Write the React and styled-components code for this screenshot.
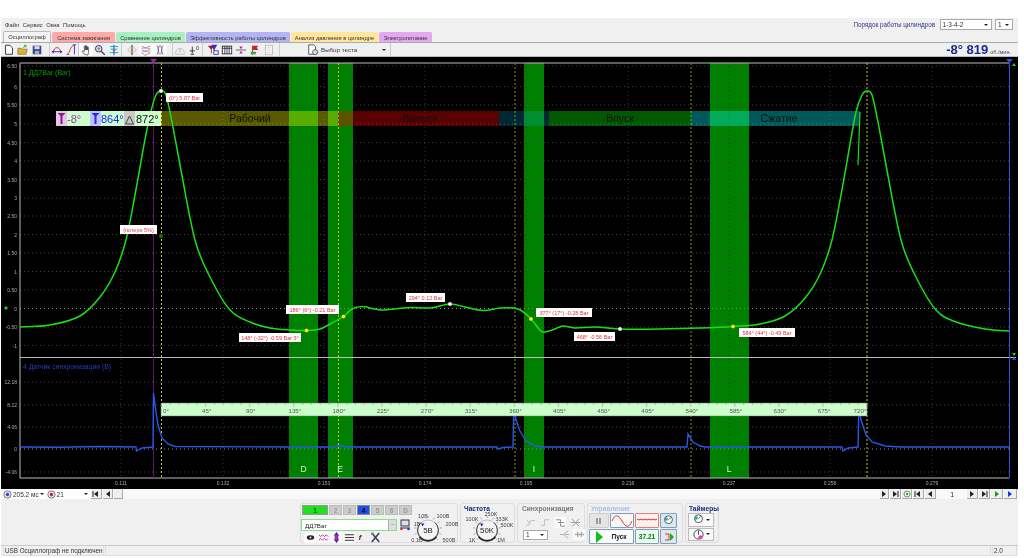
import React from 'react';
import styled, { createGlobalStyle } from 'styled-components';

const Global = createGlobalStyle`
  html, body { margin: 0; padding: 0; background: #fff; }
  * { box-sizing: border-box; }
  body { font-family: "Liberation Sans", Arial, sans-serif; }
`;

const Root = styled.div`
  width: 1024px; height: 558px; overflow: hidden; background: #fff;
  padding: 18px 6px 2px 1px; filter: blur(0.35px);
`;
const Win = styled.div`
  width: 1017px; height: 538px; background: #f0f0f0; display: flex; flex-direction: column;
`;
const MenuBar = styled.div`
  height: 13px; display: flex; align-items: center; padding: 0 5px 0 4px; font-size: 5.8px; color: #333; gap: 3.5px;
`;
const OrderLabel = styled.span`
  margin-left: auto; color: #33338f; font-size: 6.3px; margin-right: 1px;
`;
const Select = styled.div`
  width: ${p => p.$w}px; height: ${p => p.$h || 11}px; background: #fff; border: 1px solid #aaa; font-size: 6.5px;
  display: flex; align-items: center; justify-content: space-between; padding: 0 3px 0 2px; color: #333; flex: none;
`;
const Arrow = styled.span`
  width: 0; height: 0; border-left: 2px solid transparent; border-right: 2px solid transparent; border-top: 2.5px solid #222;
`;
const Tabs = styled.div`
  height: 11px; display: flex; padding-left: 2px; gap: 1px; align-items: flex-end;
`;
const Tab = styled.div`
  width: ${p => p.$w}px; height: ${p => p.$active ? 11 : 10}px; background: ${p => p.$bg};
  border: 1px solid ${p => p.$active ? '#bbb' : p.$bg}; border-bottom: 0; border-radius: 2px 2px 0 0;
  font-size: 5.8px; color: #333; display: flex; align-items: center; justify-content: center; white-space: nowrap;
`;
const Toolbar = styled.div`
  height: 15px; display: flex; align-items: stretch; border-top: 1px solid #aaa; border-bottom: 1px solid #bbb; padding-left: 1px;
`;
const ToolGroup = styled.div`
  display: flex; align-items: center; padding: 0 ${p => p.$r || 0}px 0 ${p => p.$l || 0}px; border-right: 1px solid #ccc;
`;
const ToolBtn = styled.div`
  width: 14px; height: 13px; display: flex; align-items: center; justify-content: center;
  background: ${p => p.$on ? '#fafafa' : 'transparent'};
`;
const TestPicker = styled.div`
  width: 111px; display: flex; align-items: center; padding: 0 4px 0 27px; font-size: 6.2px; color: #333; gap: 2px; border-right: 1px solid #ccc;
  & > :last-child { margin-left: auto; }
`;
const Readout = styled.div`
  margin-left: auto; padding-right: 7px; display: flex; align-items: baseline; gap: 2px; color: #1a2a8a; font-weight: bold; font-size: 13px; line-height: 13px;
`;
const Unit = styled.span` font-size: 5.5px; font-weight: normal; color: #445; `;
const ChartSvg = styled.svg` display: block; flex: none; `;
const Nav = styled.div`
  height: 10px; background: #f9f9f9; display: flex; align-items: center; padding-left: 2px; font-size: 6.5px; color: #333;
`;
const NavSelect = styled.div`
  width: ${p => p.$w}px; height: 10px; background: #fff; display: flex; align-items: center; justify-content: space-between; padding: 0 3px 0 1px;
`;
const NavBtn = styled.div`
  width: ${p => p.$w || 11}px; height: 10px; background: #eee; border-right: 1px solid #aaa; border-bottom: 1px solid #aaa;
  display: flex; align-items: center; justify-content: center; margin-right: 1px; flex: none;
`;
const NavPage = styled.div`
  width: 30px; text-align: center; font-size: 7px;
`;
const Spacer = styled.div` width: ${p => p.$w}px; flex: none; `;
const Panel = styled.div`
  height: 46px; display: flex; justify-content: center; gap: 2px; padding-top: 4px; padding-bottom: 2px; padding-left: 0;
`;
const Group = styled.div`
  width: ${p => p.$w}px; border: 1px solid #ddd; border-radius: 3px; display: flex; flex-direction: ${p => p.$row ? 'row' : 'column'}; padding: 1px; position: relative;
`;
const GroupTitle = styled.div`
  font-size: 6.6px; font-weight: bold; color: ${p => p.$c}; line-height: 7px; height: 7px; padding-left: ${p => p.$l ?? 2}px; white-space: nowrap;
`;
const Column = styled.div` display: flex; flex-direction: column; gap: ${p => p.$g || 0}px; flex: none; `;
const Channels = styled.div` display: flex; gap: 1px; height: 10px; `;
const Channel = styled.div`
  width: ${p => p.$w || 13}px; height: 10px; background: ${p => p.$bg || '#ccc'}; border: 1px solid ${p => p.$b || '#bbb'};
  font-size: 6.5px; font-weight: bold; color: ${p => p.$c || '#999'}; display: flex; align-items: center; justify-content: center;
`;
const SourceRow = styled.div` display: flex; align-items: center; margin-top: 4px; gap: 3px; `;
const SourceInput = styled.div`
  width: 94px; height: 10px; background: #fff; outline: 1px solid #88e088; font-size: 6.2px; color: #222; display: flex; align-items: center; justify-content: space-between; padding-left: 3px;
`;
const Dots = styled.div`
  width: 8px; height: 10px; background: #ddd; border-left: 1px solid #aaa; font-size: 5px; text-align: center; line-height: 7px;
`;
const IconRow = styled.div` display: flex; gap: ${p => p.$g ?? 1}px; margin-top: ${p => p.$m ?? 1}px; padding-left: ${p => p.$l || 2}px; align-items: center; `;
const SmallBtn = styled.div`
  width: ${p => p.$w || 12}px; height: 11px; display: flex; align-items: center; justify-content: center; background: ${p => p.$bg || 'transparent'}; flex: none;
`;
const CtlGrid = styled.div`
  display: grid; grid-template-columns: 20px 24px 24px 17px; grid-auto-rows: 15px; column-gap: 1px; row-gap: 1px; margin-top: 1px;
`;
const CtlBtn = styled.div`
  grid-column: span ${p => p.$span || 1}; border: 1px solid ${p => p.$b || '#7f9db9'}; background: ${p => p.$bg || '#fbfbfb'}; border-radius: 1px;
  display: flex; align-items: center; justify-content: center; gap: 7px; font-size: 6.6px; font-weight: bold; color: ${p => p.$c || '#222'};
`;
const TimerBtn = styled.div`
  width: 26px; height: 15px; margin: 1px 0 0 1px; background: #f8f8f8; border: 1px solid #bbb; display: flex; align-items: center; justify-content: center; gap: 2px;
`;
const Status = styled.div` height: 11px; border-top: 1px solid #ccc; display: flex; font-size: 6.3px; color: #333; padding: 0 1px 0 2px; gap: 1px; `;
const StatusCell = styled.div`
  width: ${p => p.$w ? p.$w + 'px' : 'auto'}; flex: ${p => p.$w ? 'none' : 1}; border: 1px solid #ddd; border-top: 0; display: flex; align-items: center; padding-left: 1px; white-space: nowrap;
`;
const KnobSvg = styled.svg` display: block; flex: none; overflow: visible; `;

// ---------- icon drawings ----------
const G = {
  doc: <path d="M3 1.5h5l3 3v7.5H3z" fill="#fff" stroke="#222" />,
  open: <><path d="M1 5h4l1 1h6l-1.5 6H1z" fill="#e0b030" stroke="#664" strokeWidth=".7" /><path d="M7 5l3-3.5M8 1.5h2.5V4" stroke="#2a2" fill="none" /></>,
  save: <><rect x="2" y="2" width="10" height="10" fill="#334a88" /><rect x="4" y="2.5" width="6" height="3.5" fill="#dde" /><rect x="4.5" y="8" width="5" height="4" fill="#aab" /></>,
  arc: <><path d="M2.5 11C2.5 2 11.5 2 11.5 11" stroke="#d22" fill="none" strokeWidth="1.1" /><path d="M1 9h12" stroke="#22c" /><path d="M1 9l2-1.5v3zM13 9l-2-1.5v3z" fill="#22c" /></>,
  sine: <><path d="M3 11c3 0 3-9 7-9" stroke="#d22" fill="none" /><path d="M11 1v11M2 12h3M9 1h4" stroke="#22c" /></>,
  hand: <path d="M5 12L2.5 8.5l1-.7L5 9V2.5h1.2V7V2h1.2v5l.1-4h1.2v4l.2-3h1.1v6l-1 3z" fill="#fff" stroke="#222" strokeWidth=".7" />,
  zoom: <><circle cx="5.5" cy="5.5" r="3.8" fill="#cde" stroke="#225" /><path d="M8.5 8.5l4 4" stroke="#444" strokeWidth="1.6" /><path d="M4 5.5h3M5.5 4v3" stroke="#c33" strokeWidth=".8" /></>,
  teal: <><path d="M2 3h10M3 6h8M2 10h10" stroke="#0bb" strokeWidth="1.1" /><path d="M7 1v12" stroke="#22c" /><path d="M5 7l2 2 2-2z" fill="#d44" /></>,
  cross: <><path d="M2 7c2-2 3-4 5-5 2 1 3 3 5 5-2 2-3 4-5 5-2-1-3-3-5-5z" fill="none" stroke="#9c9" /><path d="M7 1v12" stroke="#225" /><circle cx="7" cy="7" r="1.5" fill="#d66" /></>,
  wave2: <><path d="M2 3c2-1 3 3 5 2s3-3 5-2M2 7c2-1 3 3 5 2s3-3 5-2M2 11c2-1 3 3 5 2s3-3 5-2" fill="none" stroke="#b55" strokeWidth=".8" /><path d="M2 5c2 1 3-2 5-1s3 2 5 1M2 9c2 1 3-2 5-1s3 2 5 1" fill="none" stroke="#77c" strokeWidth=".8" /></>,
  wave3: <><path d="M3 2c3 0 1 10 4 10s1-10 4-10" fill="none" stroke="#c55" /><path d="M3 12c3 0 1-10 4-10s1 10 4 10" fill="none" stroke="#55c" /></>,
  gauge: <><path d="M2 10a5 5 0 0 1 10 0v2H2z" fill="none" stroke="#bbb" /><path d="M7 10V5" stroke="#aaa" /></>,
  zero: <><path d="M2 8h6" stroke="#a22" strokeWidth="1.2" /><path d="M5 3v8M3 12h4" stroke="#222" /><text x="9" y="7" fontSize="7" fill="#444">0</text></>,
  filter: <><path d="M1 2h7L5.5 6v5h-1V6z" fill="#b01030" /><path d="M5 1h7L9 6v4" fill="#22a" opacity=".9" /><rect x="8" y="8" width="5" height="4" fill="#fff" stroke="#22a" /></>,
  table: <><rect x="1.5" y="2.5" width="11" height="9" fill="#fff" stroke="#222" /><path d="M1.5 5h11M4.5 2.5v9M7 2.5v9M9.5 2.5v9" stroke="#225" /></>,
  divide: <><path d="M1 7h12" stroke="#555" /><path d="M7 6L5 3h4zM7 8l-2 3h4z" fill="#a2a" /></>,
  flag: <><path d="M4 13V2" stroke="#363" /><path d="M4 2h7l-2 2.5L11 7H4z" fill="#d02030" /><path d="M2 9h6v3H2z" fill="#3a3" /></>,
  page: <><rect x="3" y="1.5" width="8" height="11" fill="#f4f4f4" stroke="#bbb" /><path d="M5 4h4M5 7h4M5 10h4" stroke="#ddd" /></>,
  test: <><path d="M2 1h6l2 2v9H2z" fill="#fff" stroke="#444" /><circle cx="9.5" cy="9.5" r="3" fill="#cdd" stroke="#556" /></>,
  eye: <><ellipse cx="6" cy="6" rx="4" ry="2.5" fill="#222" /><circle cx="6" cy="6" r="1" fill="#eee" /></>,
  pwave: <><path d="M1 3l2 2 2-2 2 2 2-2 2 2" fill="none" stroke="#b2b" /><path d="M1 9l2-2 2 2 2-2 2 2 2-2" fill="none" stroke="#b2b" /></>,
  updown: <><path d="M6 0L3 4h6zM6 12L3 8h6z" fill="#22b" /><ellipse cx="6" cy="6" rx="2" ry="3.5" fill="#a2a" /></>,
  lines: <path d="M1 3h10M1 6h10M1 9h10" stroke="#222" />,
  fx: <text x="2" y="9" fontSize="8" fontStyle="italic" fontWeight="bold" fill="#222">f</text>,
  tool: <><path d="M2 1l8 10M10 1L2 11" stroke="#445" strokeWidth="1.8" /><circle cx="2.5" cy="2" r="1.4" fill="#778" /></>,
  sync1: <path d="M1 9h3l2-5h5M2 3l3 4" fill="none" stroke="#bbb" />,
  sync2: <path d="M1 9h4V3h5" fill="none" stroke="#bbb" />,
  sync3: <path d="M1 3h5v7h5M3 6h7" fill="none" stroke="#888" />,
  sync4: <path d="M2 2l8 8M2 10c3-1 5-5 8-8M1 6h10" fill="none" stroke="#999" />,
  sync5: <path d="M1 6h4l5-4M5 6l5 4M7 6h4" fill="none" stroke="#aaa" />,
  sync6: <path d="M1 6h10M4 3v6M8 3v6" stroke="#aaa" strokeWidth="1.4" />,
  monitor: <><rect x="2" y="1" width="8" height="6" fill="#dde" stroke="#334" /><path d="M1 9h10" stroke="#334" /><circle cx="2.5" cy="10" r="1.3" fill="#d33" /><circle cx="9.5" cy="10" r="1.3" fill="#33c" /></>,
  clock1: <><circle cx="7" cy="6" r="5" fill="#fff" stroke="#333" /><path d="M7 6l3-3" stroke="#333" /><circle cx="4" cy="5" r="2.2" fill="#2aa" /></>,
  clock2: <><circle cx="6" cy="6" r="5" fill="#fff" stroke="#333" /><path d="M6 6V2" stroke="#333" /><circle cx="8" cy="9" r="2.2" fill="#e3c" /></>,
};
const Ico = ({ n, s = 14, v = 14 }) => (
  <svg width={s} height={s} viewBox={`0 0 ${v} ${v}`}>{G[n]}</svg>
);
const Tri = ({ dir = 'r', c = '#222', double }) => (
  <svg width="8" height="6" viewBox="0 0 8 6">
    {dir === 'r' ? <path d="M2 0l4 3-4 3z" fill={c} /> : <path d="M6 0L2 3l4 3z" fill={c} />}
    {double && <path d={dir === 'r' ? 'M7 0v6' : 'M1 0v6'} stroke={c} />}
  </svg>
);
const Dial = ({ c }) => (
  <svg width="9" height="9" viewBox="0 0 9 9">
    <circle cx="4.5" cy="4.5" r="3.7" fill="#e4e4f0" stroke="#667" strokeWidth=".8" />
    <circle cx="4.5" cy="4.5" r="1.7" fill={c} />
  </svg>
);

// ---------- chart ----------
function smooth(pts) {
  let d = `M${pts[0][0]},${pts[0][1]}`;
  for (let i = 0; i < pts.length - 1; i++) {
    const p0 = pts[i - 1] || pts[i], p1 = pts[i], p2 = pts[i + 1], p3 = pts[i + 2] || p2;
    const c1 = [p1[0] + (p2[0] - p0[0]) / 6, p1[1] + (p2[1] - p0[1]) / 6];
    const c2 = [p2[0] - (p3[0] - p1[0]) / 6, p2[1] - (p3[1] - p1[1]) / 6];
    d += `C${c1[0].toFixed(1)},${c1[1].toFixed(1)} ${c2[0].toFixed(1)},${c2[1].toFixed(1)} ${p2[0]},${p2[1]}`;
  }
  return d;
}
const PRESS = [[20, 327], [50, 325], [80, 316], [100, 297], [115, 272], [126, 240], [135, 195], [143, 150], [150, 115], [156, 95], [161, 91], [166, 95], [172, 122], [180, 165], [195, 240], [210, 277], [230, 310], [250, 322], [270, 328], [290, 330], [306.5, 330.5], [320, 329], [330, 324], [343.5, 316.5], [352, 309], [362, 306.5], [375, 309], [385, 310], [410, 307.5], [430, 308], [450, 304], [465, 307], [483, 310.5], [500, 308], [514, 308], [522, 311], [531, 319], [540, 330], [545, 332], [555, 329], [563, 326], [575, 328], [595, 327], [620, 329], [660, 329], [700, 328], [733, 326.5], [760, 324], [785, 316], [806, 297], [821, 272], [832, 240], [841, 195], [849, 150], [856, 112], [862, 95], [867, 91], [872, 95], [878, 122], [886, 165], [901, 240], [916, 277], [936, 310], [956, 322], [985, 329], [1009, 331]];
const BLUE = 'M20,447L60,447.3L100,446.5L136,447L136.5,451L142,448L153,447L153.5,393L155,405L158,425L162,438L168,444L175,446.5L290,447L335,447L340,445.5L348,447L497,447L498,449L503,447.5L513,447L514,403L516,420L520,431L526,441L535,446L544,447L687,447L688,434L693,442L700,446L705,447L842,447L843,451L848,448L858,447L859,405L861,420L866,435L872,442L885,446L900,447L1009,447';
const Y_UP = [['6.50', 66], ['6', 86.5], ['5.50', 105], ['5', 124], ['4.50', 142.5], ['4', 161], ['3.50', 179.5], ['3', 198], ['2.50', 216], ['2', 234.5], ['1.50', 253], ['1', 271.5], ['0.50', 290], ['0', 308.5], ['-0.50', 327], ['-1', 345.5]];
const Y_LO = [['12.18', 382], ['8.12', 405], ['4.06', 427], ['0', 449], ['-4.06', 472]];
const X_LB = [['0.111', 121], ['0.132', 223], ['0.153', 324], ['0.174', 425], ['0.195', 526], ['0.216', 628], ['0.237', 729], ['0.258', 830], ['0.279', 932]];
const BANDS = [[289, 29], [328, 25], [524, 20], [710, 39]];
const CYCLE = [161.5, 338.5, 515, 691, 867];
const STROKES = [
  [161, 177, 'rgba(255,255,0,.35)', 'Рабочий', 250],
  [338, 161, 'rgba(255,0,0,.35)', 'Выпуск', 420],
  [499, 50, 'rgba(0,200,255,.2)', '', 0],
  [549, 142, 'rgba(0,255,0,.35)', 'Впуск', 620],
  [691, 169, 'rgba(0,255,255,.35)', 'Сжатие', 779],
];
const NOTES = [
  [166, 93, 37, '(0°) 5.87 Bar'], [120, 225, 37, '(потери 5%)'], [239, 333, 62, '148° (-32°) -0.59 Bar 3°'],
  [286, 305, 53, '186° (6°) -0.21 Bar'], [406, 293, 39, '294° 0.12 Bar'], [536, 308, 56, '377° (17°) -0.28 Bar'],
  [574, 332, 41, '468° -0.56 Bar'], [739, 328, 56, '584° (44°) -0.49 Bar'],
];
const DOTS = [[161, 91, '#fff'], [306.5, 330.5, '#ff0'], [343.5, 316.5, '#ff0'], [450, 304, '#fff'], [531, 319, '#ff0'], [620, 329, '#fff'], [733, 326.5, '#ff0']];
const degs = Array.from({ length: 17 }, (_, i) => i * 45);
const minor = Array.from({ length: 81 }, (_, i) => i);
const degX = i => (i === 16 ? 860 : i === 0 ? 166 : 162.6 + i * 44.1);

const Chart = () => (
  <ChartSvg width="1017" height="432" viewBox="1 57 1017 432" fontFamily="'Liberation Sans', Arial, sans-serif">
    <rect x="1" y="57" width="1017" height="432" fill="#000" />
    {BANDS.map(([x, w]) => <rect key={x} x={x} y="63" width={w} height="415" fill="#008000" />)}
    {[...Y_UP, ...Y_LO].map(([t, y]) => (
      <g key={t + y}>
        <path d={`M20 ${y}H1009`} stroke={t === '0' ? '#888' : '#444'} strokeDasharray="1 3" />
        <text x="17" y={y + 2} fontSize="5" fill="#aaa" textAnchor="end">{t}</text>
      </g>
    ))}
    {X_LB.map(([t, x]) => (
      <g key={t}>
        <path d={`M${x} 63V478`} stroke="#333" strokeDasharray="1 3" />
        <text x={x} y="485" fontSize="5" fill="#aaa" textAnchor="middle">{t}</text>
      </g>
    ))}
    <path d="M20 63H1009M20 63V478H1009M20 357.5H1016" stroke="#bbb" fill="none" />
    <path d="M153.5 63V478" stroke="#66116a" />
    <path d="M1009.5 63V478" stroke="#3050e0" />
    {CYCLE.map(x => <path key={x} d={`M${x} 63V478`} stroke={x === 515 || x === 691 ? '#8a8a20' : '#c8c830'} strokeDasharray="2 2" />)}
    {STROKES.map(([x, w, c, t, cx]) => (
      <g key={x}>
        <rect x={x} y="111" width={w} height="15" fill={c} />
        {t && <text x={cx} y="122" fontSize="10.5" fill="#111" textAnchor="middle">{t}</text>}
      </g>
    ))}
    <path d={smooth(PRESS)} stroke="#18e018" strokeWidth="1.5" fill="none" />
    <path d="M858 165L860 112" stroke="#18e018" strokeWidth="1.2" />
    <g>
      <rect x="56" y="111" width="105" height="15" fill="#ccffcc" />
      <rect x="56" y="111" width="11" height="15" fill="#e6c4e6" />
      <path d="M57.5 113h8l-3 3v8h-2v-8z" fill="#8a1a8a" />
      <text x="67" y="122.5" fontSize="11" fill="#a040a0">-8°</text>
      <rect x="90" y="111" width="11" height="15" fill="#c0c0ff" />
      <path d="M91.5 113h8l-3 3v8h-2v-8z" fill="#2a2ae0" />
      <text x="101" y="122.5" fontSize="11" fill="#2020ff">864°</text>
      <rect x="124" y="111" width="11" height="15" fill="#c8c8c8" />
      <path d="M129.5 116l-4 8h8z" fill="none" stroke="#444" />
      <text x="136" y="122.5" fontSize="11" fill="#111">872°</text>
    </g>
    <text x="23" y="74.5" fontSize="7" fill="#00a000">1 ДД7Bar (Bar)</text>
    <text x="23" y="369" fontSize="6.8" fill="#2040c0">4 Датчик синхронизации (В)</text>
    <path d={BLUE} stroke="#2858e8" strokeWidth="1.4" fill="none" />
    <rect x="161" y="403" width="706" height="13" fill="#ccffcc" stroke="#777" strokeWidth=".5" />
    {minor.map(i => <path key={i} d={`M${161.5 + i * 8.82} 403V${i % 5 === 0 ? 407 : 405}`} stroke="#889" strokeWidth=".5" />)}
    {degs.map((d, i) => (
      <text key={d} x={degX(i)} y="412.5" fontSize="6.2" fill="#555" textAnchor="middle">{d}°</text>
    ))}
    <circle cx="161" cy="236" r="2" fill="#0a7a0a" />
    {DOTS.map(([x, y, c]) => <circle key={x} cx={x} cy={y} r="2.1" fill={c} stroke="#333" strokeWidth=".3" />)}
    {NOTES.map(([x, y, w, t]) => (
      <g key={t}>
        <rect x={x} y={y} width={w} height="9" fill="#fff" />
        <text x={x + w / 2} y={y + 6.5} fontSize="5.5" fill="#e83040" textAnchor="middle">{t}</text>
      </g>
    ))}
    {['D', 'E', 'I', 'L'].map((t, i) => (
      <text key={t} x={[303.5, 340, 534, 729][i]} y="472" fontSize="8.5" fill="#ccffcc" textAnchor="middle">{t}</text>
    ))}
    <path d="M150 59h7l-3.5 4z" fill="#a020a0" />
    <path d="M1006 59h7l-3.5 4z" fill="#3050f0" />
    <path d="M1012 66l2-3 2 3z" fill="#20d020" />
    <path d="M1012 353h4l-2 3z" fill="#20d020" />
    <path d="M1012 360h4l-2-3z" fill="#2050f0" />
    <path d="M6 306l2 2-2 2-2-2z" fill="#20d020" />
  </ChartSvg>
);

const Knob = ({ value, labels, x0, y0, w, h }) => (
  <KnobSvg width={w} height={h} viewBox={`${x0} ${y0} ${w} ${h}`} fontFamily="'Liberation Sans', Arial, sans-serif">
    {Array.from({ length: 11 }, (_, i) => {
      const a = (i * 27 + 135) * Math.PI / 180;
      return <path key={i} d={`M${29 + 12 * Math.cos(a)} ${23 + 12 * Math.sin(a)}L${29 + 14 * Math.cos(a)} ${23 + 14 * Math.sin(a)}`} stroke="#777" strokeWidth=".6" />;
    })}
    <circle cx="29" cy="23" r="10" fill="#f4f4f4" stroke="#999" strokeWidth=".6" />
    <path d="M37.5 29.5A10.5 10.5 0 0 1 20.5 29.5" fill="none" stroke="#222" strokeWidth="1.6" />
    <path d="M36 15.5A10.5 10.5 0 0 1 37.5 29.5M22 15.5A10.5 10.5 0 0 0 20.5 29.5" fill="none" stroke="#444" strokeWidth="1" />
    <path d="M22 16.5l3.5 0-2 3z" fill="#22c" />
    <text x="29" y="26" fontSize="7.8" textAnchor="middle" fill="#222">{value}</text>
    {labels.map(([t, x, y]) => <text key={t} x={x} y={y + 2} fontSize="5.5" textAnchor="middle" fill="#444">{t}</text>)}
  </KnobSvg>
);

const SigWave = ({ c, d }) => <svg width="22" height="12" viewBox="0 0 22 12"><path d={d} fill="none" stroke={c} strokeWidth="1" /></svg>;

export default function App() {
  return (
    <Root>
      <Global />
      <Win>
        <MenuBar>
          <span>Файл</span><span>Сервис</span><span>Окна</span><span>Помощь</span>
          <OrderLabel>Порядок работы цилиндров</OrderLabel>
          <Select $w={52}>1-3-4-2<Arrow /></Select>
          <Select $w={18}>1<Arrow /></Select>
        </MenuBar>
        <Tabs>
          <Tab $w={48} $bg="#f4f4f4" $active>Осциллограф</Tab>
          <Tab $w={63} $bg="#ffa8a8">Система зажигания</Tab>
          <Tab $w={69} $bg="#a8f0c0">Сравнение цилиндров</Tab>
          <Tab $w={104} $bg="#b4b4f4">Эффективность работы цилиндров</Tab>
          <Tab $w={87} $bg="#ffe69c">Анализ давления в цилиндре</Tab>
          <Tab $w={53} $bg="#e4a8f0">Электропитание</Tab>
        </Tabs>
        <Toolbar>
          <ToolGroup $r={5}>
            {['doc', 'open', 'save'].map(n => <ToolBtn key={n}><Ico n={n} s={12} /></ToolBtn>)}
          </ToolGroup>
          <ToolGroup>
            {['arc', 'sine'].map(n => <ToolBtn key={n}><Ico n={n} s={12} /></ToolBtn>)}
          </ToolGroup>
          <ToolGroup>
            <ToolBtn $on><Ico n="hand" s={12} /></ToolBtn>
            <ToolBtn><Ico n="zoom" s={12} /></ToolBtn>
            <ToolBtn><Ico n="teal" s={12} /></ToolBtn>
          </ToolGroup>
          <ToolGroup $l={3} $r={5}>
            {['cross', 'wave2', 'wave3'].map(n => <ToolBtn key={n} $on={n !== 'cross'}><Ico n={n} s={12} /></ToolBtn>)}
          </ToolGroup>
          <ToolGroup $r={1}>
            {['gauge', 'zero'].map(n => <ToolBtn key={n}><Ico n={n} s={12} /></ToolBtn>)}
          </ToolGroup>
          <ToolGroup $l={3} $r={3}>
            {['filter', 'table', 'divide', 'flag', 'page'].map(n => <ToolBtn key={n}><Ico n={n} s={12} /></ToolBtn>)}
          </ToolGroup>
          <TestPicker><Ico n="test" s={12} />Выбор теста<Arrow /></TestPicker>
          <Readout>-8° 819<Unit>об./мин.</Unit></Readout>
        </Toolbar>
        <Chart />
        <Nav>
          <Dial c="#3344cc" />
          <NavSelect $w={35}>205.2 мс<Arrow /></NavSelect>
          <Dial c="#cc2222" />
          <NavSelect $w={36}>21<Arrow /></NavSelect>
          <NavBtn><Tri dir="l" double /></NavBtn>
          <NavBtn $w={10}><Tri dir="l" /></NavBtn>
          <NavBtn $w={9} />
          <Spacer $w={756} />
          <NavBtn $w={9}><Tri /></NavBtn>
          <NavBtn><Tri double /></NavBtn>
          <NavBtn $w={10}><svg width="8" height="8"><circle cx="4" cy="4" r="3" fill="#dfd" stroke="#888" /><circle cx="4" cy="4" r="1.2" fill="#2a2" /></svg></NavBtn>
          <NavBtn><Tri dir="l" double /></NavBtn>
          <NavBtn $w={11}><Tri dir="l" /></NavBtn>
          <NavPage>1</NavPage>
          <NavBtn><Tri /></NavBtn>
          <NavBtn><Tri double /></NavBtn>
          <NavBtn $w={12}><Tri c="#12a012" /></NavBtn>
          <NavBtn $w={13}><Tri c="#1a30e0" /></NavBtn>
        </Nav>
        <Panel>
          <Group $w={158} $row>
            <Column>
              <Channels>
                <Channel $w={26} $bg="#20e020" $b="#999" $c="#063">1</Channel>
                <Channel>2</Channel>
                <Channel>3</Channel>
                <Channel $bg="#2050e0" $b="#889" $c="#002">4</Channel>
                <Channel>5</Channel>
                <Channel>6</Channel>
                <Channel>D</Channel>
              </Channels>
              <SourceRow>
                <SourceInput>ДД7Bar<Dots>...</Dots></SourceInput>
                <Ico n="monitor" s={12} v={12} />
              </SourceRow>
              <IconRow>
                {['eye', 'pwave', 'updown', 'lines', 'fx', 'tool'].map(n => <SmallBtn key={n} $bg={n === 'fx' || n === 'tool' ? 'transparent' : '#fafafa'}><Ico n={n} s={11} v={12} /></SmallBtn>)}
              </IconRow>
            </Column>
            <Knob value="5В" x0={13} y0={-2} w={44} h={38} labels={[['10В', 24, 9], ['100В', 44, 9], ['200В', 53, 17], ['1В', 18, 17], ['0.1В', 18, 33], ['500В', 50, 33]]} />
          </Group>
          <Group $w={55}>
            <GroupTitle $c="#1a2a80">Частота</GroupTitle>
            <Knob value="50K" x0={4} y0={5} w={51} h={31} labels={[['250K', 33, 7], ['100K', 14, 12], ['333K', 44, 12], ['500K', 49, 18], ['1K', 14, 33], ['1M', 43, 33]]} />
          </Group>
          <Group $w={68}>
            <GroupTitle $c="#777" $l={3}>Синхронизация</GroupTitle>
            <IconRow $l={5} $m={5} $g={3}>
              {['sync1', 'sync2', 'sync3', 'sync4'].map(n => <SmallBtn key={n} $bg={n === 'sync3' ? '#fafafa' : 'transparent'}><Ico n={n} s={11} v={12} /></SmallBtn>)}
            </IconRow>
            <IconRow $l={4} $m={1} $g={3}>
              <Select $w={25} $h={10}>1<Arrow /></Select>
              <Spacer $w={4} />
              <SmallBtn><Ico n="sync5" s={11} v={12} /></SmallBtn>
              <SmallBtn $bg="#fafafa"><Ico n="sync6" s={11} v={12} /></SmallBtn>
            </IconRow>
          </Group>
          <Group $w={96}>
            <GroupTitle $c="#a8c0e8">Управление</GroupTitle>
            <CtlGrid>
              <CtlBtn $b="#ccc" $bg="#e4e4e4"><svg width="6" height="8"><path d="M1 1v6M4 1v6" stroke="#888" strokeWidth="1.6" /></svg></CtlBtn>
              <CtlBtn $bg="#f8f8f8"><SigWave c="#e03030" d="M1 6c3-7 6-7 10 0s7 7 10 0" /></CtlBtn>
              <CtlBtn $b="#e08080" $bg="#fff0f0"><SigWave c="#d03030" d="M1 4l2 1 2-1 2 1 2-1 2 1 2-1 2 1 2-1 2 1 2-1" /></CtlBtn>
              <CtlBtn $bg="#dde8ee"><Ico n="clock1" s={11} /></CtlBtn>
              <CtlBtn $span={2}><svg width="8" height="12"><path d="M0 0l7 6-7 6z" fill="#10c010" /></svg>Пуск</CtlBtn>
              <CtlBtn $c="#107010" $bg="#e8fff0">37.21</CtlBtn>
              <CtlBtn $bg="#dde8ee"><svg width="11" height="10"><path d="M2 2h4v6H2" fill="none" stroke="#d33" /><path d="M7 1l4 4-4 4z" fill="#2a2" /></svg></CtlBtn>
            </CtlGrid>
          </Group>
          <Group $w={34}>
            <GroupTitle $c="#1a2a80">Таймеры</GroupTitle>
            <TimerBtn><Ico n="clock1" s={11} /><Arrow /></TimerBtn>
            <TimerBtn><Ico n="clock2" s={11} v={12} /><Arrow /></TimerBtn>
          </Group>
        </Panel>
        <Status>
          <StatusCell $w={101}>USB Осциллограф не подключен</StatusCell>
          <StatusCell />
          <StatusCell $w={25}>2.0</StatusCell>
        </Status>
      </Win>
    </Root>
  );
}
